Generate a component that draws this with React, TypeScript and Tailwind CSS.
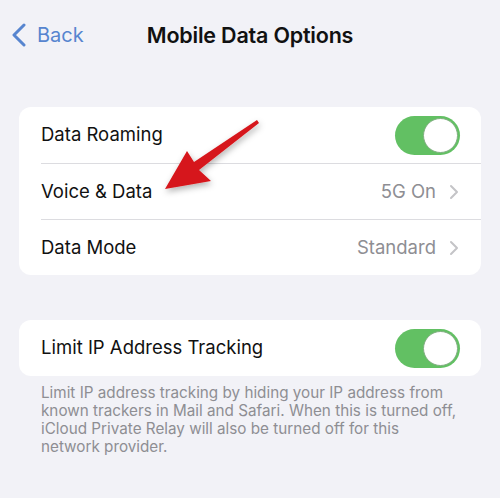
import React from "react";

const font = { fontFamily: "Inter, 'Noto Sans', sans-serif" };

function Toggle() {
  return (
    <div className="relative h-[39px] w-[65px] rounded-full bg-[#62c063]">
      <div className="absolute right-[2px] top-[2px] h-[35px] w-[35px] rounded-full border border-[#7fae7f] bg-white" />
    </div>
  );
}

function Chevron() {
  return (
    <svg width="10" height="16" viewBox="0 0 10 16" className="ml-[13px]">
      <path d="M2 2 L8 8 L2 14" fill="none" stroke="#c4c4c7" strokeWidth="2" strokeLinecap="round" strokeLinejoin="round" />
    </svg>
  );
}

export default function App() {
  return (
    <div className="relative h-[498px] w-[500px] overflow-hidden bg-[#f2f2f7] text-[#111]" style={font}>
      <div className="relative flex h-[70px] items-center justify-center">
        <div className="absolute left-[11px] top-[23px] flex items-center text-[#5785cf]">
          <svg width="16" height="24" viewBox="0 0 16 24">
            <path d="M13 2 L3 12 L13 22" fill="none" stroke="#5785cf" strokeWidth="3" strokeLinecap="round" strokeLinejoin="round" />
          </svg>
          <span className="ml-[10px] text-[20px] leading-[24px]">Back</span>
        </div>
        <span className="text-[21.5px] font-semibold tracking-[-0.2px] text-[#111]">Mobile Data Options</span>
      </div>

      <div className="mx-[19px] mt-[37px] overflow-hidden rounded-[12px] bg-white">
        <div className="flex h-[56px] items-center justify-between pl-[22px] pr-[21px]">
          <span className="text-[18.5px]">Data Roaming</span>
          <Toggle />
        </div>
        <div className="ml-[22px] h-px bg-[#dcdce0]" />
        <div className="flex h-[55px] items-center justify-between pl-[22px] pr-[22px]">
          <span className="text-[18.5px]">Voice &amp; Data</span>
          <div className="flex items-center text-[18.5px] text-[#8e8e93]">
            5G On
            <Chevron />
          </div>
        </div>
        <div className="ml-[22px] h-px bg-[#dcdce0]" />
        <div className="flex h-[55px] items-center justify-between pl-[22px] pr-[22px]">
          <span className="text-[18.5px]">Data Mode</span>
          <div className="flex items-center text-[18.5px] text-[#8e8e93]">
            Standard
            <Chevron />
          </div>
        </div>
      </div>

      <div className="mx-[19px] mt-[45px] rounded-[12px] bg-white">
        <div className="flex h-[56px] items-center justify-between pl-[22px] pr-[21px]">
          <span className="text-[18.5px]">Limit IP Address Tracking</span>
          <Toggle />
        </div>
      </div>

      <p className="mt-[8px] pl-[41px] pr-[42px] text-[15.25px] leading-[18px] text-[#8e8e93]">
        Limit IP address tracking by hiding your IP address from known trackers in Mail and Safari. When this is turned off, iCloud Private Relay will also be turned off for this network provider.
      </p>

      <svg className="pointer-events-none absolute left-0 top-0" width="500" height="498" viewBox="0 0 500 498">
        <defs>
          <filter id="sh" x="-30%" y="-30%" width="160%" height="160%">
            <feDropShadow dx="1" dy="3" stdDeviation="3" floodColor="#000" floodOpacity="0.3" />
          </filter>
        </defs>
        <polygon
          points="165,189 187,151 194,162 257,120 259,123 199,170 211,181"
          fill="#d6141a"
          filter="url(#sh)"
        />
      </svg>
    </div>
  );
}
